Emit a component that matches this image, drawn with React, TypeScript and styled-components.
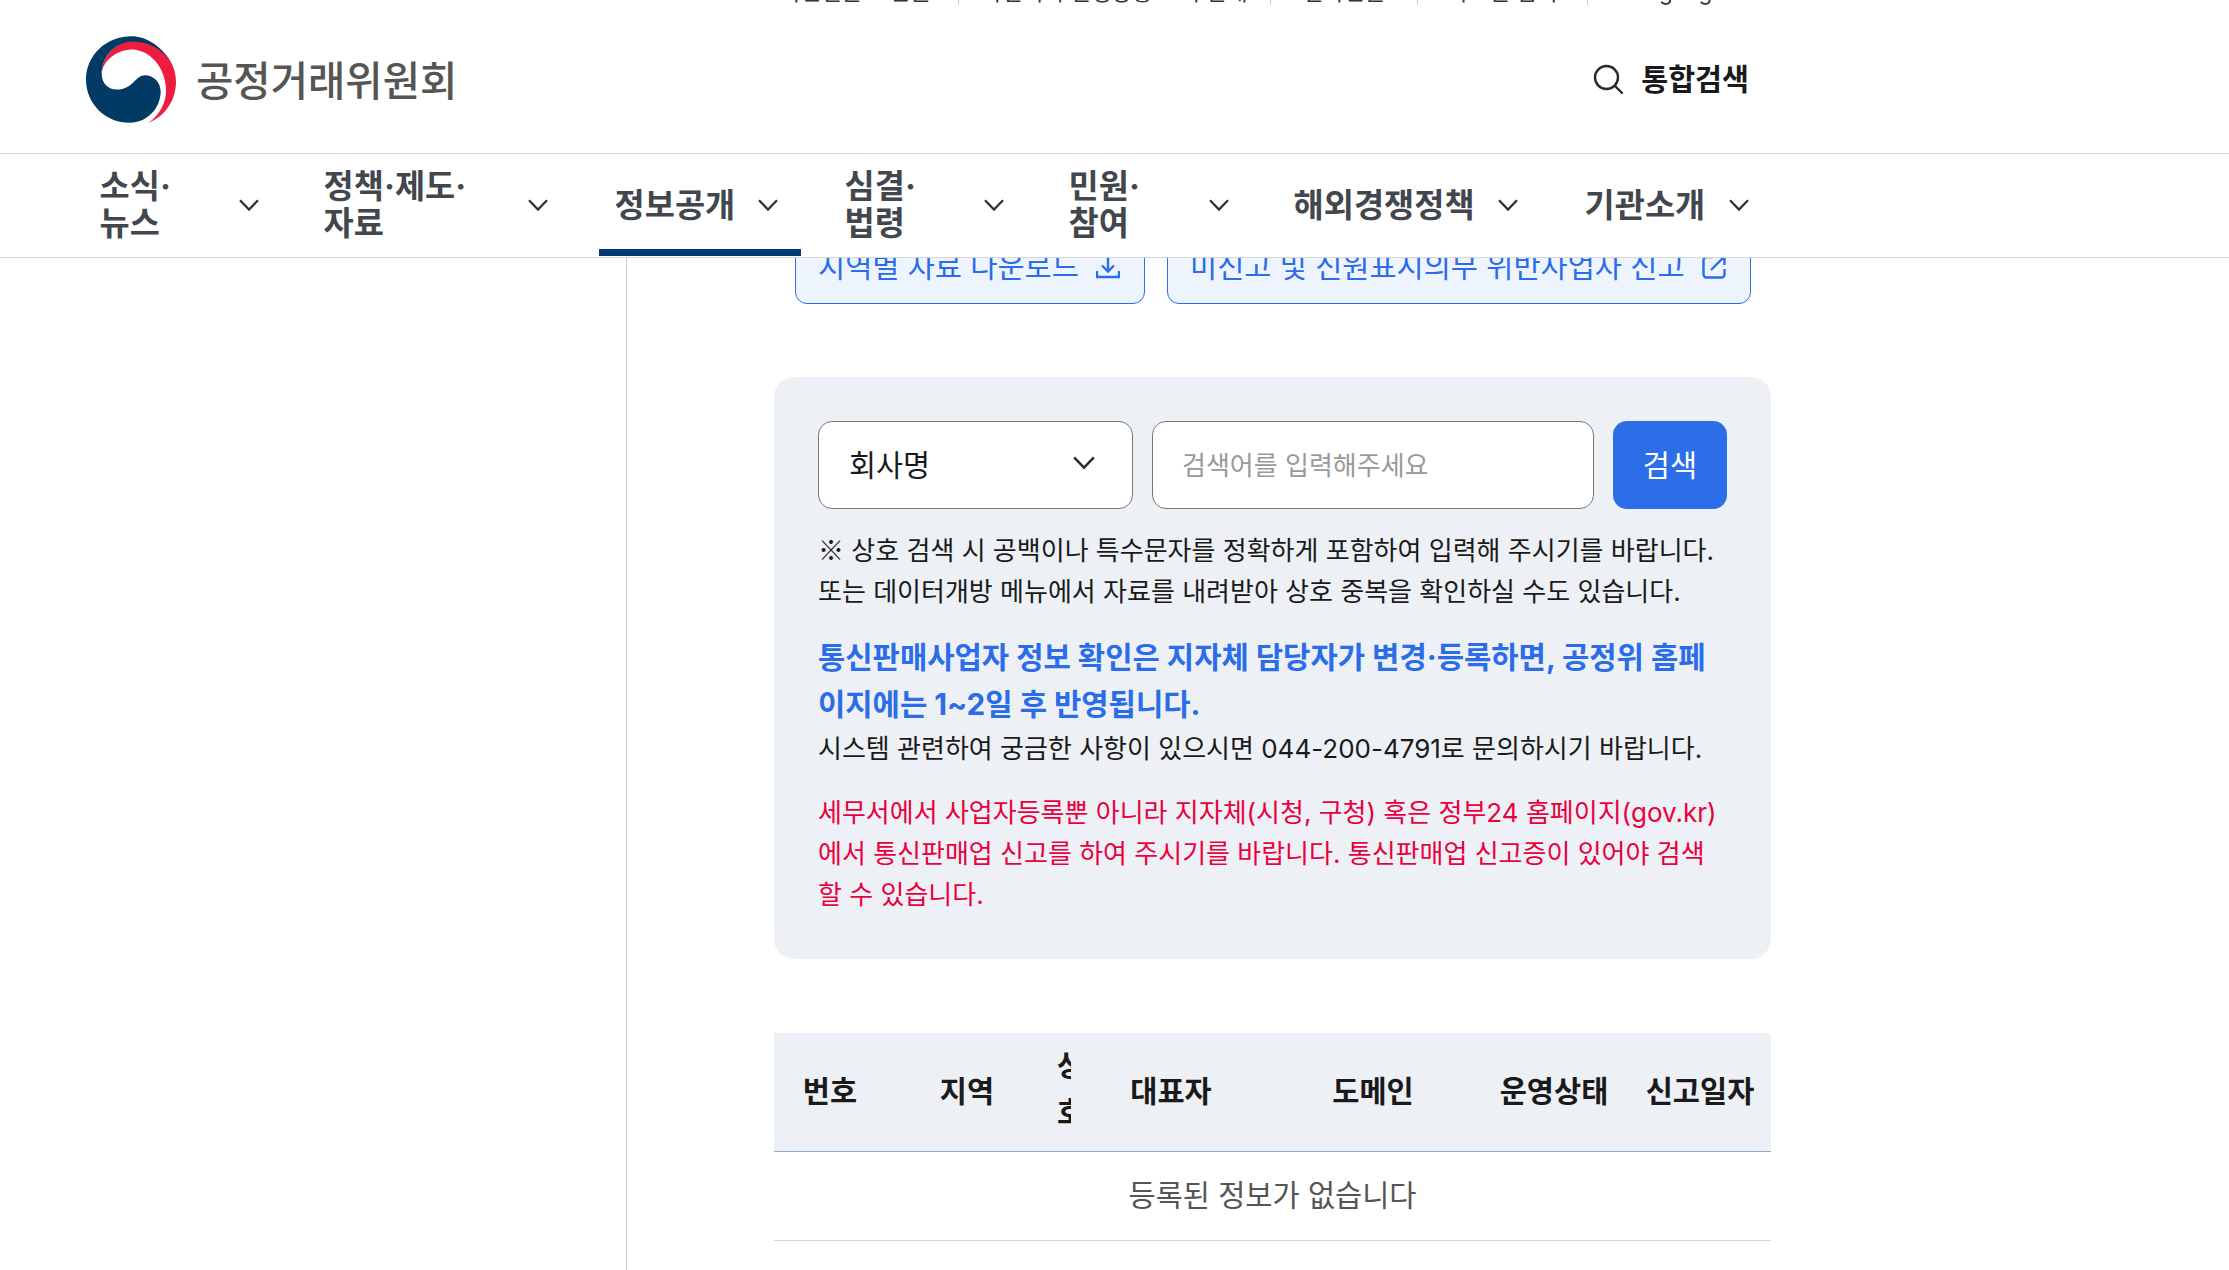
import React from "react";
import styled, { createGlobalStyle } from "styled-components";

const Global = createGlobalStyle`
  html, body { margin: 0; padding: 0; background: #fff; overflow: hidden; }
  * { box-sizing: border-box; }
  body { font-family: Inter, "Noto Sans CJK KR", "Noto Sans", sans-serif; color: #1a1a1a; }
`;

const Page = styled.div`
  width: 2229px;
  height: 1270px;
  overflow: hidden;
  display: flex;
  flex-direction: column;
`;

const Header = styled.header`
  flex: none;
  background: #fff;
`;

const TopStrip = styled.div`
  height: 5px;
  overflow: hidden;
  display: flex;
  align-items: flex-end;
  padding-left: 780px;
`;

const TopLink = styled.a<{ $w: number; $pr?: number; $last?: boolean }>`
  flex: none;
  width: ${(p) => p.$w}px;
  height: 27px;
  padding-right: ${(p) => p.$pr ?? 0}px;
  line-height: 27px;
  font-size: 22.4px;
  white-space: nowrap;
  text-align: center;
  color: #333;
  border-right: ${(p) => (p.$last ? "none" : "1px solid #ccc")};
`;

const Brand = styled.div`
  height: 148px;
  padding: 0 480px 0 86px;
  display: flex;
  align-items: center;
  justify-content: space-between;
`;

const Logo = styled.div`
  display: flex;
  align-items: center;
  gap: 20px;
`;

const LogoText = styled.span`
  font-size: 40.6px;
  font-weight: 500;
  line-height: 1;
  color: #555;
  padding-top: 7px;
`;

const SearchLink = styled.a`
  display: flex;
  align-items: center;
  gap: 17px;
  font-size: 29.3px;
  font-weight: 700;
  color: #1a1a1a;
`;

const SearchLabel = styled.span`
  padding-bottom: 5px;
`;

const NavBar = styled.nav`
  height: 105px;
  padding-left: 84px;
  display: flex;
  border-top: 1px solid #d6d6d6;
  border-bottom: 1px solid #d6d6d6;
`;

const NavItem = styled.a<{ $w: number; $mr: number; $active?: boolean }>`
  flex: none;
  width: ${(p) => p.$w}px;
  height: 102px;
  margin-right: ${(p) => p.$mr}px;
  padding: 0 ${(p) => (p.$active ? 23 : 16)}px 0 15.6px;
  display: flex;
  align-items: center;
  justify-content: space-between;
  font-size: 32.8px;
  font-weight: 700;
  line-height: 37px;
  color: #42474e;
  border-top: 7px solid transparent;
  border-bottom: 7px solid ${(p) => (p.$active ? "#003a74" : "transparent")};
`;

const Main = styled.main`
  flex: 1;
  min-height: 0;
  display: flex;
`;

const Sidebar = styled.aside`
  flex: none;
  width: 627px;
  border-right: 1px solid #cfcfcf;
`;

const Content = styled.section`
  flex: none;
  width: 997px;
  margin-left: 147px;
  display: flex;
  flex-direction: column;
`;

const ButtonClip = styled.div`
  flex: none;
  height: 46px;
  overflow: hidden;
  padding: 0 20px 0 21px;
  display: flex;
  align-items: flex-end;
  gap: 22px;
`;

const LinkButton = styled.a<{ $w: number }>`
  flex: none;
  width: ${(p) => p.$w}px;
  height: 74px;
  padding: 0 24px 0 22px;
  display: flex;
  align-items: center;
  justify-content: space-between;
  background: #eef4fe;
  border: 1.5px solid #2b6ce8;
  border-radius: 12px;
  font-size: 29.5px;
  line-height: 1;
  color: #2b6ce8;
`;

const Panel = styled.div`
  flex: none;
  margin-top: 73px;
  background: #edf0f5;
  border-radius: 20px;
  padding: 44px 44px 44px;
`;

const SearchRow = styled.form`
  display: flex;
  gap: 19px;
  height: 88px;
`;

const SelectBox = styled.div`
  flex: none;
  width: 315px;
  padding: 0 37px 4px 30px;
  display: flex;
  align-items: center;
  justify-content: space-between;
  background: #fff;
  border: 1px solid #777;
  border-radius: 14px;
  font-size: 29.4px;
`;

const SearchInput = styled.input`
  flex: none;
  width: 442px;
  padding: 0 29px;
  background: #fff;
  border: 1px solid #777;
  border-radius: 14px;
  font-family: inherit;
  font-size: 26px;
  &::placeholder { color: #999; opacity: 1; }
`;

const SearchButton = styled.button`
  flex: none;
  width: 114px;
  padding: 0 0 5px;
  background: #2b6ee8;
  border: 0;
  border-radius: 14px;
  color: #fff;
  font-family: inherit;
  font-size: 29.5px;
`;

const Note = styled.p<{ $mt: number; $red?: boolean }>`
  margin: ${(p) => p.$mt}px 0 0;
  font-size: 26px;
  line-height: 41px;
  color: ${(p) => (p.$red ? "#e8003f" : "#1a1a1a")};
`;

const Mark = styled.span`
  font-family: "Noto Sans CJK KR", sans-serif;
  line-height: 0;
`;

const Lead = styled.p`
  margin: 22px 0 0;
  font-size: 29.7px;
  font-weight: 700;
  line-height: 47px;
  color: #2b6ce8;
`;

const Table = styled.table`
  flex: none;
  margin-top: 74px;
  width: 997px;
  table-layout: fixed;
  border-collapse: collapse;
`;

const Th = styled.th<{ $w: number; $pl?: number }>`
  width: ${(p) => p.$w}px;
  height: 118px;
  padding: 0 0 5px ${(p) => p.$pl ?? 0}px;
  background: #edf0f5;
  border-bottom: 1px solid #8fadd0;
  font-size: 29.5px;
  font-weight: 700;
  color: #1a1a1a;
  text-align: center;
`;

const Squeezed = styled.span`
  display: block;
  width: 14px;
  margin-left: 9px;
  overflow: hidden;
  word-break: break-all;
  line-height: 47px;
  font-size: 29.5px;
  text-align: left;
`;

const Td = styled.td`
  height: 89px;
  padding: 0 0 5px;
  border-bottom: 1px solid #d6d6d6;
  font-size: 29.5px;
  text-align: center;
  color: #555;
`;

const Chevron = ({ size = 20 }: { size?: number }) => (
  <svg width={size} height={size * 0.6} viewBox="0 0 20 12" fill="none" stroke="#2b2f33" strokeWidth="2.2" style={{ flex: "none" }}>
    <path d="M1 1.2 10 10.6 19 1.2" />
  </svg>
);

const navItems = [
  { w: 191, mr: 33, label: <>소식·<br />뉴스</> },
  { w: 256, mr: 35, label: <>정책·제도·<br />자료</> },
  { w: 202, mr: 28, label: <>정보공개</>, active: true },
  { w: 191, mr: 33, label: <>심결·<br />법령</> },
  { w: 192, mr: 33, label: <>민원·<br />참여</> },
  { w: 256, mr: 35, label: <>해외경쟁정책</> },
  { w: 196, mr: 0, label: <>기관소개</> },
];

const topLinks = [
  { w: 179, pr: 40, t: "국민신문고 민원" },
  { w: 312, pr: 0, t: "사건처리 진행상황 조회 안내" },
  { w: 147, pr: 0, t: "전자민원" },
  { w: 170, pr: 0, t: "자료실 검색" },
];

export default function App() {
  return (
    <Page>
      <Global />
      <Header>
        <TopStrip>
          {topLinks.map((l) => (
            <TopLink key={l.t} $w={l.w} $pr={l.pr}>{l.t}</TopLink>
          ))}
          <TopLink $w={170} $last>Language</TopLink>
        </TopStrip>
        <Brand>
          <Logo>
            <svg width="90" height="87" viewBox="48 48 270 260" style={{ flex: "none" }}>
              <path fill="#ee1c3f" d="M95 160C95 115 135 62 190 62 262 62 318 115 318 185 318 240 285 290 235 308 270 285 290 245 288 205 285 140 240 92 190 88 140 88 100 120 95 160Z" />
              <path fill="#023a66" d="M302 125C275 78 230 48 183 48 108 48 48 106 48 178 48 250 105 308 180 308 230 308 272 265 272 215 272 185 250 165 225 165 195 165 190 208 140 208 115 208 95 190 95 160 96 110 135 64 190 64 240 64 280 92 302 125Z" />
            </svg>
            <LogoText>공정거래위원회</LogoText>
          </Logo>
          <SearchLink>
            <svg width="31" height="31" viewBox="0 0 31 31" fill="none" stroke="#2b2b2b" strokeWidth="2.4" strokeLinecap="round" style={{ flex: "none" }}>
              <circle cx="13.5" cy="13.5" r="11.5" />
              <path d="M22 22 29 29" />
            </svg>
            <SearchLabel>통합검색</SearchLabel>
          </SearchLink>
        </Brand>
        <NavBar>
          {navItems.map((n, i) => (
            <NavItem key={i} $w={n.w} $mr={n.mr} $active={n.active}>
              <span>{n.label}</span>
              <Chevron />
            </NavItem>
          ))}
        </NavBar>
      </Header>
      <Main>
        <Sidebar />
        <Content>
          <ButtonClip>
            <LinkButton $w={350}>
              지역별 자료 다운로드
              <svg width="24" height="24" viewBox="0 0 24 24" fill="none" stroke="#2b6ce8" strokeWidth="2.4" style={{ flex: "none" }}>
                <path d="M12 1V16M6 10.5l6 6 6-6M1 16v6h22v-6" />
              </svg>
            </LinkButton>
            <LinkButton $w={584}>
              미신고 및 신원표시의무 위반사업자 신고
              <svg width="24" height="24" viewBox="0 0 24 24" fill="none" stroke="#2b6ce8" strokeWidth="2.4" style={{ flex: "none" }}>
                <path d="M10 2H4.5A3 3 0 0 0 1.5 5V19.5A3 3 0 0 0 4.5 22.5H19.5A3 3 0 0 0 22.5 19.5V14M9 15 22.5 1.5M14 1.5H22.5V10" />
              </svg>
            </LinkButton>
          </ButtonClip>
          <Panel>
            <SearchRow>
              <SelectBox>
                회사명
                <Chevron size={22} />
              </SelectBox>
              <SearchInput placeholder="검색어를 입력해주세요" />
              <SearchButton type="button">검색</SearchButton>
            </SearchRow>
            <Note $mt={21}>
              <Mark>※</Mark> 상호 검색 시 공백이나 특수문자를 정확하게 포함하여 입력해 주시기를 바랍니다.<br />
              또는 데이터개방 메뉴에서 자료를 내려받아 상호 중복을 확인하실 수도 있습니다.
            </Note>
            <Lead>통신판매사업자 정보 확인은 지자체 담당자가 변경·등록하면, 공정위 홈페이지에는 1~2일 후 반영됩니다.</Lead>
            <Note $mt={0}>시스템 관련하여 궁금한 사항이 있으시면 044-200-4791로 문의하시기 바랍니다.</Note>
            <Note $mt={23} $red>
              세무서에서 사업자등록뿐 아니라 지자체(시청, 구청) 혹은 정부24 홈페이지(gov.kr)에서 통신판매업 신고를 하여 주시기를 바랍니다. 통신판매업 신고증이 있어야 검색할 수 있습니다.
            </Note>
          </Panel>
          <Table>
            <thead>
              <tr>
                <Th $w={112}>번호</Th>
                <Th $w={162}>지역</Th>
                <Th $w={34}><Squeezed>상호</Squeezed></Th>
                <Th $w={178}>대표자</Th>
                <Th $w={226}>도메인</Th>
                <Th $w={136}>운영상태</Th>
                <Th $w={149} $pl={7}>신고일자</Th>
              </tr>
            </thead>
            <tbody>
              <tr>
                <Td colSpan={7}>등록된 정보가 없습니다</Td>
              </tr>
            </tbody>
          </Table>
        </Content>
      </Main>
    </Page>
  );
}
